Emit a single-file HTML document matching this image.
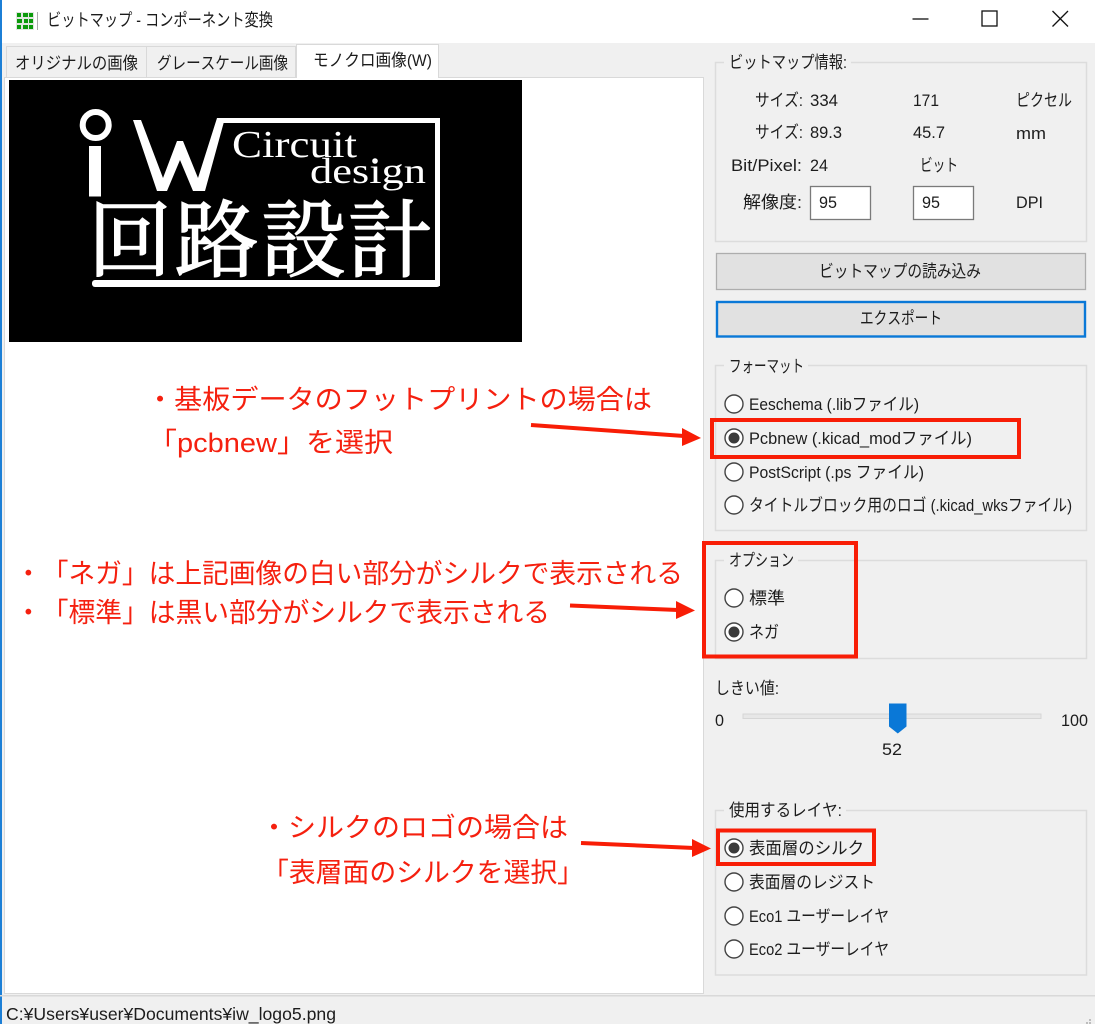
<!DOCTYPE html>
<html lang="ja">
<head>
<meta charset="utf-8">
<title>ビットマップ - コンポーネント変換</title>
<style>
html,body{margin:0;padding:0;background:#f0f0f0;width:1095px;height:1024px;overflow:hidden}
svg{display:block}
text{font-family:"Liberation Sans","Noto Sans CJK JP",sans-serif;fill:#1c1c1c;font-size:17px;text-spacing-trim:space-all;font-kerning:none}
.a text{fill:#f5200f;font-size:27px}
.g{fill:none;stroke:#dcdcdc;stroke-width:1.5}
.r{fill:#fff;stroke:#444;stroke-width:1.4}
.d{fill:#3a3a3a}
.x{fill:none;stroke:#f81d06;stroke-width:4}
</style>
</head>
<body>
<svg width="1095" height="1024" viewBox="0 0 1095 1024" xmlns="http://www.w3.org/2000/svg">
<rect width="1095" height="1024" fill="#f0f0f0"/>
<!-- title bar -->
<rect width="1095" height="43" fill="#fff"/>
<rect x="0" y="0" width="2" height="1024" fill="#1c7fd6"/>
<g>
<rect x="16" y="12" width="18" height="18" fill="#dfe6df"/>
<rect x="17" y="13" width="4" height="4" fill="#0a9a0a"/><rect x="23" y="13" width="5" height="4" fill="#0a9a0a"/><rect x="29" y="13" width="4" height="4" fill="#0a9a0a"/>
<rect x="17" y="19" width="5" height="4" fill="#0a9a0a"/><rect x="24" y="19" width="4" height="4" fill="#0a9a0a"/><rect x="29" y="19" width="4" height="4" fill="#0a9a0a"/>
<rect x="17" y="25" width="4" height="4" fill="#0a9a0a"/><rect x="23" y="25" width="5" height="4" fill="#0a9a0a"/><rect x="29" y="25" width="4" height="4" fill="#0a9a0a"/>
<rect x="37" y="12" width="1" height="18" fill="#aaa"/>
</g>
<text x="47" y="26" textLength="226" lengthAdjust="spacingAndGlyphs" style="font-size:17.5px">ビットマップ - コンポーネント変換</text>
<path d="M912.5 19h16" stroke="#111" stroke-width="1.3" fill="none"/>
<rect x="982" y="11" width="15" height="15" fill="none" stroke="#111" stroke-width="1.3"/>
<path d="M1052.5 11l15.5 15.5M1068 11l-15.5 15.5" stroke="#111" stroke-width="1.3" fill="none"/>

<!-- notebook -->
<rect x="4.5" y="77.5" width="699" height="916" fill="#fff" stroke="#d9d9d9"/>
<rect x="6.5" y="46.5" width="140" height="31" fill="#f0f0f0" stroke="#d9d9d9"/>
<rect x="146.5" y="46.5" width="149" height="31" fill="#f0f0f0" stroke="#d9d9d9"/>
<path d="M296.5 78V44.5h142V78" fill="#fff" stroke="#d9d9d9"/>
<rect x="297" y="45" width="141" height="34" fill="#fff"/>
<text x="15" y="69" textLength="123" lengthAdjust="spacingAndGlyphs">オリジナルの画像</text>
<text x="157" y="69" textLength="131" lengthAdjust="spacingAndGlyphs">グレースケール画像</text>
<text x="313" y="66" textLength="119" lengthAdjust="spacingAndGlyphs">モノクロ画像(W)</text>

<!-- logo -->
<rect x="9" y="80" width="513" height="262" fill="#000"/>
<g fill="#fff">
<circle cx="95.7" cy="125" r="13" fill="none" stroke="#fff" stroke-width="6"/>
<rect x="89" y="146" width="12" height="50.500"/>
<path d="M133 120H141L163 178L177 141H183L198 178L217 118H225L205 191H193L180 160L167 191H157Z"/>
<rect x="222" y="118" width="218" height="5"/>
<rect x="435" y="118" width="5" height="168"/>
<rect x="92" y="280" width="348" height="7" rx="3"/>
<text x="232" y="157" textLength="125" lengthAdjust="spacingAndGlyphs" style="font-family:'Liberation Serif',serif;font-size:38px;fill:#fff">Circuit</text>
<circle cx="375" cy="161" r="2.800"/>
<text x="310" y="183" textLength="116" lengthAdjust="spacingAndGlyphs" style="font-family:'Liberation Serif',serif;font-size:36px;fill:#fff">design</text>
<text x="88" y="270" textLength="344" lengthAdjust="spacing" style="font-family:'Liberation Serif','Noto Serif CJK SC','Noto Sans CJK JP',serif;font-size:84px;font-weight:400;fill:#fff;stroke:#fff;stroke-width:1.4">回路設計</text>
</g>

<!-- bitmap info -->
<rect class="g" x="715.500" y="62.500" width="371" height="179"/>
<rect x="724" y="55" width="127" height="16" fill="#f0f0f0"/>
<text x="729" y="68" textLength="118" lengthAdjust="spacingAndGlyphs">ビットマップ情報:</text>
<text x="755" y="106" textLength="48" lengthAdjust="spacingAndGlyphs">サイズ:</text>
<text x="810" y="106" textLength="28" lengthAdjust="spacingAndGlyphs">334</text>
<text x="913" y="106" textLength="26" lengthAdjust="spacingAndGlyphs">171</text>
<text x="1016" y="106" textLength="56" lengthAdjust="spacingAndGlyphs">ピクセル</text>
<text x="755" y="138" textLength="48" lengthAdjust="spacingAndGlyphs">サイズ:</text>
<text x="810" y="138" textLength="32" lengthAdjust="spacingAndGlyphs">89.3</text>
<text x="913" y="138" textLength="32" lengthAdjust="spacingAndGlyphs">45.7</text>
<text x="1016" y="139" textLength="30" lengthAdjust="spacingAndGlyphs">mm</text>
<text x="731" y="171" textLength="71" lengthAdjust="spacingAndGlyphs">Bit/Pixel:</text>
<text x="810" y="171" textLength="18" lengthAdjust="spacingAndGlyphs">24</text>
<text x="920" y="171" textLength="38" lengthAdjust="spacingAndGlyphs">ビット</text>
<text x="743" y="208" textLength="59" lengthAdjust="spacingAndGlyphs">解像度:</text>
<rect x="810.500" y="186.500" width="60" height="33" fill="#fff" stroke="#7a7a7a" stroke-width="1.300"/>
<text x="819" y="208" textLength="18" lengthAdjust="spacingAndGlyphs">95</text>
<rect x="913.500" y="186.500" width="60" height="33" fill="#fff" stroke="#7a7a7a" stroke-width="1.300"/>
<text x="922" y="208" textLength="18" lengthAdjust="spacingAndGlyphs">95</text>
<text x="1016" y="208" textLength="27" lengthAdjust="spacingAndGlyphs">DPI</text>

<!-- buttons -->
<rect x="716.500" y="253.500" width="369" height="36" fill="#e1e1e1" stroke="#adadad" stroke-width="1.300"/>
<text x="819" y="277" textLength="162" lengthAdjust="spacingAndGlyphs">ビットマップの読み込み</text>
<rect x="717" y="302" width="368" height="34.500" fill="#e1e1e1" stroke="#0a78d7" stroke-width="2.400"/>
<text x="860" y="324" textLength="82" lengthAdjust="spacingAndGlyphs">エクスポート</text>

<!-- format -->
<rect class="g" x="715.500" y="365.500" width="371" height="165"/>
<rect x="724" y="358" width="84" height="16" fill="#f0f0f0"/>
<text x="729" y="372" textLength="75" lengthAdjust="spacingAndGlyphs">フォーマット</text>
<circle class="r" cx="734" cy="404" r="9"/>
<text x="749" y="410" textLength="170" lengthAdjust="spacingAndGlyphs">Eeschema (.libファイル)</text>
<circle class="r" cx="734" cy="438" r="9"/><circle class="d" cx="734" cy="438" r="5.500"/>
<text x="749" y="444" textLength="223" lengthAdjust="spacingAndGlyphs">Pcbnew (.kicad_modファイル)</text>
<circle class="r" cx="734" cy="472" r="9"/>
<text x="749" y="478" textLength="175" lengthAdjust="spacingAndGlyphs">PostScript (.ps ファイル)</text>
<circle class="r" cx="734" cy="505" r="9"/>
<text x="749" y="511" textLength="323" lengthAdjust="spacingAndGlyphs">タイトルブロック用のロゴ (.kicad_wksファイル)</text>

<!-- options -->
<rect class="g" x="715.500" y="560.500" width="371" height="98"/>
<rect x="724" y="553" width="74" height="16" fill="#f0f0f0"/>
<text x="729" y="566" textLength="65" lengthAdjust="spacingAndGlyphs">オプション</text>
<circle class="r" cx="734" cy="598" r="9"/>
<text x="749" y="604" textLength="36" lengthAdjust="spacingAndGlyphs">標準</text>
<circle class="r" cx="734" cy="632" r="9"/><circle class="d" cx="734" cy="632" r="5.500"/>
<text x="749" y="638" textLength="30" lengthAdjust="spacingAndGlyphs">ネガ</text>

<!-- slider -->
<text x="715" y="694" textLength="64" lengthAdjust="spacingAndGlyphs">しきい値:</text>
<text x="715" y="726" textLength="9" lengthAdjust="spacingAndGlyphs">0</text>
<rect x="743" y="714" width="298" height="4.500" fill="#e7e7e7" stroke="#d6d6d6"/>
<path d="M889 703.500h17.500v23l-8.700 7l-8.800-7z" fill="#0a78d7"/>
<text x="1061" y="726" textLength="27" lengthAdjust="spacingAndGlyphs">100</text>
<text x="882" y="755" textLength="20" lengthAdjust="spacingAndGlyphs">52</text>

<!-- layers -->
<rect class="g" x="715.500" y="810.500" width="371" height="164.500"/>
<rect x="724" y="803" width="122" height="16" fill="#f0f0f0"/>
<text x="729" y="816" textLength="113" lengthAdjust="spacingAndGlyphs">使用するレイヤ:</text>
<circle class="r" cx="734" cy="848" r="9"/><circle class="d" cx="734" cy="848" r="5.500"/>
<text x="749" y="854" textLength="115" lengthAdjust="spacingAndGlyphs">表面層のシルク</text>
<circle class="r" cx="734" cy="882" r="9"/>
<text x="749" y="888" textLength="126" lengthAdjust="spacingAndGlyphs">表面層のレジスト</text>
<circle class="r" cx="734" cy="916" r="9"/>
<text x="749" y="922" textLength="140" lengthAdjust="spacingAndGlyphs">Eco1 ユーザーレイヤ</text>
<circle class="r" cx="734" cy="949" r="9"/>
<text x="749" y="955" textLength="140" lengthAdjust="spacingAndGlyphs">Eco2 ユーザーレイヤ</text>

<!-- status bar -->
<rect x="0" y="995" width="1095" height="1.500" fill="#d9d9d9"/>
<text x="6" y="1020" textLength="330" lengthAdjust="spacingAndGlyphs" style="font-size:17.5px">C:¥Users¥user¥Documents¥iw_logo5.png</text>
<path d="M1089 1019h2v2h-2zM1086 1022h2v2h-2zM1089 1022h2v2h-2z" fill="#bdbdbd"/>

<!-- annotations -->
<g class="a">
<text x="146" y="409" textLength="506" lengthAdjust="spacingAndGlyphs">・基板データのフットプリントの場合は</text>
<text x="148" y="452" textLength="245" lengthAdjust="spacingAndGlyphs">「pcbnew」を選択</text>
<text x="15" y="583" textLength="668" lengthAdjust="spacingAndGlyphs">・「ネガ」は上記画像の白い部分がシルクで表示される</text>
<text x="15" y="622" textLength="535" lengthAdjust="spacingAndGlyphs">・「標準」は黒い部分がシルクで表示される</text>
<text x="260" y="837" textLength="308" lengthAdjust="spacingAndGlyphs">・シルクのロゴの場合は</text>
<text x="262" y="882" textLength="322" lengthAdjust="spacingAndGlyphs">「表層面のシルクを選択」</text>
</g>
<!-- arrows -->
<path d="M531 425L684 436" stroke="#f81d06" stroke-width="4" fill="none"/>
<path d="M682 428L701 438L682 446z" fill="#f81d06"/>
<path d="M570 605.500L678 610" stroke="#f81d06" stroke-width="4" fill="none"/>
<path d="M676 601L695 610.500L676 619z" fill="#f81d06"/>
<path d="M581 843L694 848" stroke="#f81d06" stroke-width="4" fill="none"/>
<path d="M692 839L711 848.500L692 857z" fill="#f81d06"/>
<!-- red boxes -->
<rect class="x" x="712" y="420" width="307" height="37"/>
<rect class="x" x="704" y="543" width="152" height="113.500"/>
<rect class="x" x="718" y="830.500" width="156" height="33.500"/>
</svg>
</body>
</html>
